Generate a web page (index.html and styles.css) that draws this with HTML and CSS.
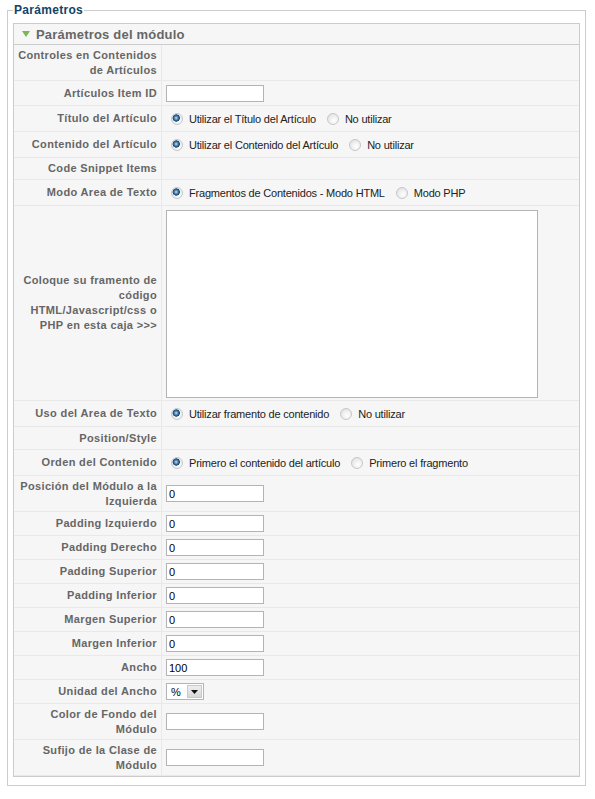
FILE: index.html
```html
<!DOCTYPE html>
<html lang="es">
<head>
<meta charset="utf-8">
<title>Parámetros</title>
<link rel="stylesheet" href="styles.css">
</head>
<body>
<fieldset class="adminform">
  <legend>Parámetros</legend>
  <div class="panel">
    <h3 class="panel-title"><svg class="toggler" width="8" height="6" viewBox="0 0 8 6"><path d="M0 0H8L4 6Z" fill="#7cb652"/></svg><span>Parámetros del módulo</span></h3>
    <div class="plist">
      <div class="prow h36"><div class="key">Controles en Contenidos<br>de Artículos</div><div class="val"></div></div>
      <div class="prow h25"><div class="key">Artículos Item ID</div><div class="val"><input class="text" type="text" value=""></div></div>
      <div class="prow h26"><div class="key">Título del Artículo</div><div class="val"><input class="radio" type="radio" name="t" checked><label>Utilizar el Título del Artículo</label><input class="radio" type="radio" name="t"><label>No utilizar</label></div></div>
      <div class="prow h26"><div class="key">Contenido del Artículo</div><div class="val"><input class="radio" type="radio" name="c" checked><label>Utilizar el Contenido del Artículo</label><input class="radio" type="radio" name="c"><label>No utilizar</label></div></div>
      <div class="prow h22"><div class="key">Code Snippet Items</div><div class="val"></div></div>
      <div class="prow h26"><div class="key">Modo Area de Texto</div><div class="val"><input class="radio" type="radio" name="m" checked><label>Fragmentos de Contenidos - Modo HTML</label><input class="radio" type="radio" name="m"><label>Modo PHP</label></div></div>
      <div class="prow h195"><div class="key">Coloque su framento de<br>código<br>HTML/Javascript/css o<br>PHP en esta caja &gt;&gt;&gt;</div><div class="val top"><textarea class="code"></textarea></div></div>
      <div class="prow h26"><div class="key">Uso del Area de Texto</div><div class="val"><input class="radio" type="radio" name="u" checked><label>Utilizar framento de contenido</label><input class="radio" type="radio" name="u"><label>No utilizar</label></div></div>
      <div class="prow h23"><div class="key">Position/Style</div><div class="val"></div></div>
      <div class="prow h26"><div class="key">Orden del Contenido</div><div class="val"><input class="radio" type="radio" name="o" checked><label>Primero el contenido del artículo</label><input class="radio" type="radio" name="o"><label>Primero el fragmento</label></div></div>
      <div class="prow h36"><div class="key">Posición del Módulo a la<br>Izquierda</div><div class="val"><input class="text" type="text" value="0"></div></div>
      <div class="prow h24"><div class="key">Padding Izquierdo</div><div class="val"><input class="text" type="text" value="0"></div></div>
      <div class="prow h24"><div class="key">Padding Derecho</div><div class="val"><input class="text" type="text" value="0"></div></div>
      <div class="prow h24"><div class="key">Padding Superior</div><div class="val"><input class="text" type="text" value="0"></div></div>
      <div class="prow h24"><div class="key">Padding Inferior</div><div class="val"><input class="text" type="text" value="0"></div></div>
      <div class="prow h24"><div class="key">Margen Superior</div><div class="val"><input class="text" type="text" value="0"></div></div>
      <div class="prow h24"><div class="key">Margen Inferior</div><div class="val"><input class="text" type="text" value="0"></div></div>
      <div class="prow h24"><div class="key">Ancho</div><div class="val"><input class="text" type="text" value="100"></div></div>
      <div class="prow h24"><div class="key">Unidad del Ancho</div><div class="val"><span class="selwrap"><select class="unit"><option>%</option><option>px</option></select><span class="selbtn"><svg width="7" height="4" viewBox="0 0 7 4"><path d="M0 0H7L3.5 4Z" fill="#111"/></svg></span></span></div></div>
      <div class="prow h36"><div class="key">Color de Fondo del<br>Módulo</div><div class="val"><input class="text" type="text" value=""></div></div>
      <div class="prow h36"><div class="key">Sufijo de la Clase de<br>Módulo</div><div class="val"><input class="text" type="text" value=""></div></div>
    </div>
  </div>
</fieldset>
</body>
</html>
```
FILE: styles.css
```css
html, body {
  margin: 0;
  padding: 0;
  background: #fff;
}
body {
  font-family: "Liberation Sans", Arial, sans-serif;
  font-size: 11px;
  color: #333;
}
.adminform {
  box-sizing: border-box;
  width: 579px;
  margin: 3px 0 0 7px;
  padding: 6px 5px 8px 5px;
  border: 1px solid #ccc;
  min-width: 0;
}
.adminform legend {
  padding: 0 1px;
  color: #146;
  font-weight: bold;
  font-size: 12px;
  line-height: 14px;
  letter-spacing: 0.3px;
}
.panel {
  border: 1px solid #ccc;
  background: #f6f6f6;
}
.panel-title {
  margin: 0;
  height: 20px;
  border-bottom: 1px solid #ccc;
  display: flex;
  align-items: center;
  padding-left: 8px;
  font-size: 13px;
  font-weight: bold;
  color: #666;
  letter-spacing: 0.2px;
}
.toggler {
  margin-right: 6px;
  flex: none;
}
.prow {
  display: grid;
  grid-template-columns: 148px 1fr;
  box-sizing: border-box;
}
.h22 { height: 22px; }
.h23 { height: 23px; }
.h24 { height: 24px; }
.h25 { height: 25px; }
.h26 { height: 26px; }
.h36 { height: 36px; }
.h195 { height: 195px; }
.key {
  box-sizing: border-box;
  border-right: 1px solid #e9e9e9;
  border-bottom: 1px solid #e9e9e9;
  display: flex;
  align-items: center;
  justify-content: flex-end;
  text-align: right;
  padding: 0 4px 0 0;
  font-weight: bold;
  color: #666;
  line-height: 15px;
  letter-spacing: 0.35px;
  white-space: nowrap;
}
.val {
  box-sizing: border-box;
  border-bottom: 1px solid #e9e9e9;
  display: flex;
  align-items: center;
  padding-left: 4px;
  white-space: nowrap;
}
.val.top {
  align-items: flex-start;
}
.text {
  box-sizing: border-box;
  width: 98px;
  height: 17px;
  margin: 0;
  padding: 0 2px;
  border: 1px solid #b4b4b4;
  background: #fff;
  font-family: "Liberation Sans", Arial, sans-serif;
  font-size: 11px;
  color: #000;
}
.code {
  box-sizing: border-box;
  width: 372px;
  height: 188px;
  margin: 4px 0 0 0;
  padding: 2px;
  border: 1px solid #b4b4b4;
  background: #fff;
  resize: none;
}
.radio {
  -webkit-appearance: none;
  appearance: none;
  box-sizing: border-box;
  width: 12px;
  height: 12px;
  margin: 0 6px 0 5px;
  border-radius: 50%;
  border: 1px solid #c4c8cc;
  background: radial-gradient(circle at 60% 65%, #ffffff 0, #f0f0f0 45%, #d6d9dc 100%);
  flex: none;
}
.radio:checked {
  background:
    radial-gradient(circle at 42% 40%, #c9e0f2 0, #6d9dc6 1.3px, #2c5f8f 2.6px, #1d4a74 3.4px, rgba(0,0,0,0) 3.9px),
    radial-gradient(circle at 60% 65%, #ffffff 0, #f0f0f0 45%, #d6d9dc 100%);
}
.val label {
  margin-right: 6px;
  color: #222;
  letter-spacing: -0.2px;
}
.selwrap {
  position: relative;
  display: inline-block;
  width: 38px;
  height: 17px;
}
.unit {
  -webkit-appearance: none;
  appearance: none;
  box-sizing: border-box;
  width: 38px;
  height: 17px;
  margin: 0;
  padding: 0 0 0 4px;
  border: 1px solid #b4b4b4;
  border-radius: 0;
  background: #fff;
  font-family: "Liberation Sans", Arial, sans-serif;
  font-size: 11px;
  color: #000;
}
.selbtn {
  position: absolute;
  top: 2px;
  right: 2px;
  width: 15px;
  height: 13px;
  box-sizing: border-box;
  border: 1px solid #c9c9c9;
  background: linear-gradient(#eeeeee, #d8d8d8);
  display: flex;
  align-items: center;
  justify-content: center;
  pointer-events: none;
}
```
